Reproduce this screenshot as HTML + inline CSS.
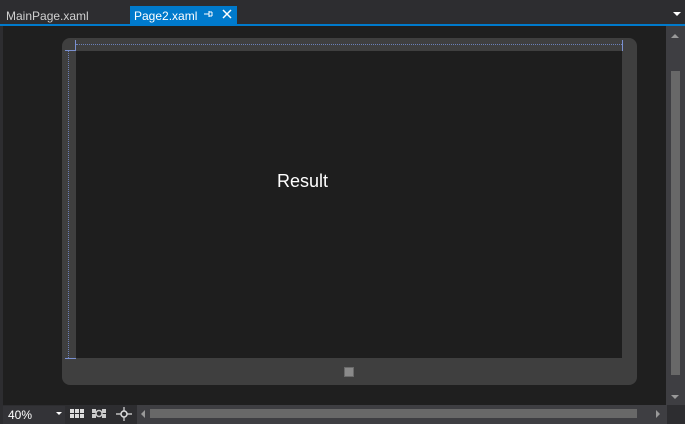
<!DOCTYPE html>
<html><head><style>
body{margin:0;width:685px;height:424px;background:#2d2d30;position:relative;overflow:hidden;font-family:"Liberation Sans",sans-serif;}
div{position:absolute;box-sizing:border-box;}
.t{font-size:12px;color:#f1f1f1;}
</style></head><body>
<div class="t" style="left:6px;top:9px;color:#d0d0d0">MainPage.xaml</div>
<div style="left:130px;top:6px;width:107px;height:19px;background:#007acc"></div>
<div class="t" style="left:134px;top:9px;color:#fff">Page2.xaml</div>
<svg style="position:absolute;left:203px;top:10px" width="10" height="8"><path d="M1 4H6M6 1V7M6 2H9M6 6H9M9 2V6" stroke="#fff" fill="none"/></svg>
<svg style="position:absolute;left:222px;top:9px" width="10" height="10"><path d="M1 1L9 9M9 1L1 9" stroke="#fff" stroke-width="1.5"/></svg>
<div style="left:673px;top:12px;width:0;height:0;border-left:4px solid transparent;border-right:4px solid transparent;border-top:4px solid #fff"></div>
<div style="left:0;top:24px;width:685px;height:2px;background:#007acc"></div>
<div style="left:3px;top:26px;width:663px;height:379px;background:#1f1f1f"></div>
<div style="left:62px;top:38px;width:575px;height:347px;background:#3f3f3f;border-radius:8px"></div>
<div style="left:76px;top:51px;width:546px;height:307px;background:#1e1e1e"></div>
<div style="left:76px;top:44px;width:546px;border-top:1px dotted #6a7fb8"></div>
<div style="left:68px;top:51px;height:307px;border-left:1px dotted #6a7fb8"></div>
<div style="left:75px;top:40px;width:1px;height:11px;background:#7a90d0"></div>
<div style="left:622px;top:40px;width:1px;height:11px;background:#7a90d0"></div>
<div style="left:65px;top:50px;width:11px;height:1px;background:#7a90d0"></div>
<div style="left:65px;top:358px;width:11px;height:1px;background:#7a90d0"></div>
<div style="left:344px;top:367px;width:10px;height:10px;border:1px solid #6a6a6a;background:#8a8a8a"></div>
<div style="left:277px;top:171px;color:#fff;font-size:18px">Result</div>
<div style="left:666px;top:26px;width:19px;height:379px;background:#3e3e42"></div>
<div style="left:671px;top:71px;width:9px;height:304px;background:#686868"></div>
<div style="left:671px;top:34px;width:0;height:0;border-left:4px solid transparent;border-right:4px solid transparent;border-bottom:4px solid #999"></div>
<div style="left:671px;top:395px;width:0;height:0;border-left:4px solid transparent;border-right:4px solid transparent;border-top:4px solid #999"></div>
<div style="left:0;top:405px;width:685px;height:19px;background:#2d2d30"></div>
<div style="left:3px;top:406px;width:62px;height:18px;background:#333337"></div>
<div class="t" style="left:8px;top:408px;color:#fff">40%</div>
<div style="left:56px;top:412px;width:0;height:0;border-left:3px solid transparent;border-right:3px solid transparent;border-top:3px solid #fff"></div>
<svg style="position:absolute;left:70px;top:409px" width="15" height="10"><g fill="#ddd"><rect x="0" y="0" width="4" height="4"/><rect x="5" y="0" width="4" height="4"/><rect x="10" y="0" width="4" height="4"/><rect x="0" y="5" width="4" height="4"/><rect x="5" y="5" width="4" height="4"/><rect x="10" y="5" width="4" height="4"/></g></svg>
<svg style="position:absolute;left:92px;top:409px" width="15" height="10"><g fill="#ccc"><rect x="0" y="0" width="4" height="4"/><rect x="10" y="0" width="4" height="4"/><rect x="0" y="5" width="4" height="4"/><rect x="10" y="5" width="4" height="4"/></g><circle cx="7" cy="4.5" r="3" fill="none" stroke="#ccc" stroke-width="1.5"/></svg>
<svg style="position:absolute;left:116px;top:407px" width="16" height="14"><path d="M8 0V14M0 7H16" stroke="#ddd" stroke-width="1.2"/><circle cx="8" cy="7" r="3" fill="#2d2d30" stroke="#ddd" stroke-width="1.5"/></svg>
<div style="left:137px;top:405px;width:530px;height:19px;background:#3e3e42"></div>
<div style="left:150px;top:409px;width:487px;height:9px;background:#686868"></div>
<div style="left:141px;top:410px;width:0;height:0;border-top:4px solid transparent;border-bottom:4px solid transparent;border-right:4px solid #999"></div>
<div style="left:656px;top:410px;width:0;height:0;border-top:4px solid transparent;border-bottom:4px solid transparent;border-left:4px solid #999"></div>
</body></html>
